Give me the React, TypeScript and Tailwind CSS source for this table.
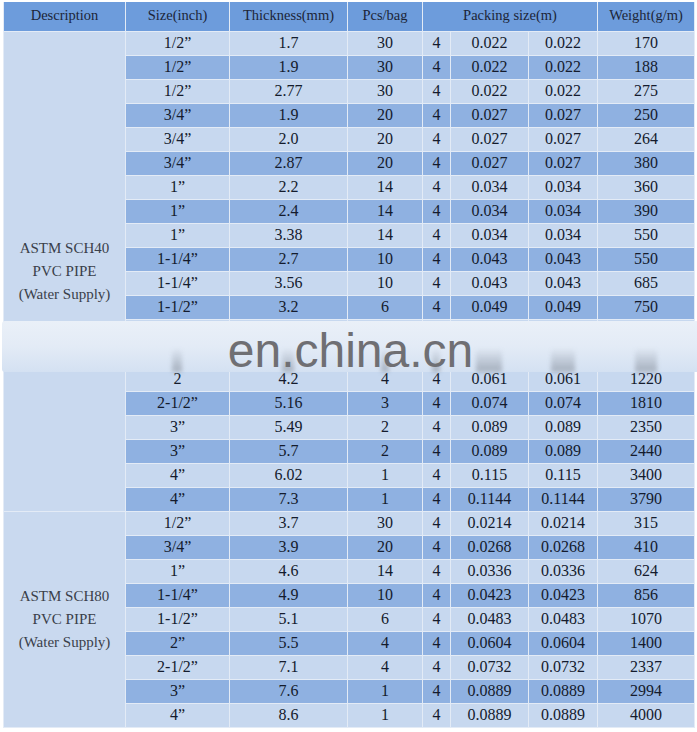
import React from "react";

type Row = [string, string, string, string, string, string, string];

const sch40: Row[] = [
  ["1/2”", "1.7", "30", "4", "0.022", "0.022", "170"],
  ["1/2”", "1.9", "30", "4", "0.022", "0.022", "188"],
  ["1/2”", "2.77", "30", "4", "0.022", "0.022", "275"],
  ["3/4”", "1.9", "20", "4", "0.027", "0.027", "250"],
  ["3/4”", "2.0", "20", "4", "0.027", "0.027", "264"],
  ["3/4”", "2.87", "20", "4", "0.027", "0.027", "380"],
  ["1”", "2.2", "14", "4", "0.034", "0.034", "360"],
  ["1”", "2.4", "14", "4", "0.034", "0.034", "390"],
  ["1”", "3.38", "14", "4", "0.034", "0.034", "550"],
  ["1-1/4”", "2.7", "10", "4", "0.043", "0.043", "550"],
  ["1-1/4”", "3.56", "10", "4", "0.043", "0.043", "685"],
  ["1-1/2”", "3.2", "6", "4", "0.049", "0.049", "750"],
  ["", "", "", "", "", "", ""],
  ["", "", "", "", "", "", ""],
  ["2", "4.2", "4", "4", "0.061", "0.061", "1220"],
  ["2-1/2”", "5.16", "3", "4", "0.074", "0.074", "1810"],
  ["3”", "5.49", "2", "4", "0.089", "0.089", "2350"],
  ["3”", "5.7", "2", "4", "0.089", "0.089", "2440"],
  ["4”", "6.02", "1", "4", "0.115", "0.115", "3400"],
  ["4”", "7.3", "1", "4", "0.1144", "0.1144", "3790"],
];

const sch80: Row[] = [
  ["1/2”", "3.7", "30", "4", "0.0214", "0.0214", "315"],
  ["3/4”", "3.9", "20", "4", "0.0268", "0.0268", "410"],
  ["1”", "4.6", "14", "4", "0.0336", "0.0336", "624"],
  ["1-1/4”", "4.9", "10", "4", "0.0423", "0.0423", "856"],
  ["1-1/2”", "5.1", "6", "4", "0.0483", "0.0483", "1070"],
  ["2”", "5.5", "4", "4", "0.0604", "0.0604", "1400"],
  ["2-1/2”", "7.1", "4", "4", "0.0732", "0.0732", "2337"],
  ["3”", "7.6", "1", "4", "0.0889", "0.0889", "2994"],
  ["4”", "8.6", "1", "4", "0.0889", "0.0889", "4000"],
];

const cell = "border border-[#e3ebf6] text-center p-0 leading-none";
const th = "border border-[#e3ebf6] border-t-0 font-normal p-0";

function Section({ rows, label }: { rows: Row[]; label: string }) {
  return (
    <>
      {rows.map((r, i) => (
        <tr key={i} className={`h-[24px] ${i % 2 === 0 ? "bg-[#c7d8ef]" : "bg-[#8fb1e1]"}`}>
          {i === 0 && (
            <td
              rowSpan={rows.length}
              className="border border-[#e3ebf6] bg-[#c9d9ef] text-center align-middle text-[15px] leading-[23px] text-[#3a3f4a] p-0"
            >
              <div>{label}</div>
              <div>PVC PIPE</div>
              <div>(Water Supply)</div>
            </td>
          )}
          {r.map((v, j) => (
            <td key={j} className={cell}>
              {v}
            </td>
          ))}
        </tr>
      ))}
    </>
  );
}

const Smudge = ({ w }: { w: string }) => (
  <div className="flex justify-center items-end h-full">
    <div className={`${w} h-[24px] bg-gradient-to-b from-transparent to-[#939ca8] blur-[2px] opacity-70`} />
  </div>
);

export default function App() {
  return (
    <div className="w-[697px] h-[732px] bg-white pt-[2px] pl-[3px] relative overflow-hidden">
      <table
        className="table-fixed border-collapse text-[16px] text-[#141b2d]"
        style={{ fontFamily: '"Liberation Serif", "Times New Roman", serif', width: 691 }}
      >
        <colgroup>
          <col className="w-[122px]" />
          <col className="w-[104px]" />
          <col className="w-[118px]" />
          <col className="w-[75px]" />
          <col className="w-[28px]" />
          <col className="w-[78px]" />
          <col className="w-[69px]" />
          <col className="w-[97px]" />
        </colgroup>
        <thead>
          <tr className="h-[29px] bg-[#6d9cdc] text-[14.5px] text-[#1c2538]">
            <th className={th}>Description</th>
            <th className={th}>Size(inch)</th>
            <th className={th}>Thickness(mm)</th>
            <th className={th}>Pcs/bag</th>
            <th colSpan={3} className={th}>
              Packing size(m)
            </th>
            <th className={th}>Weight(g/m)</th>
          </tr>
        </thead>
        <tbody>
          <Section rows={sch40} label="ASTM SCH40" />
          <Section rows={sch80} label="ASTM SCH80" />
        </tbody>
      </table>

      {/* watermark band overlaying the table */}
      <div className="absolute left-[2px] right-0 top-[321px] h-[51px] rounded-l-[3px] bg-gradient-to-b from-[#eaf0f8] via-[#e3ebf6] to-[#d4e1f2]">
        <div className="grid h-full pl-[1px] grid-cols-[122px_104px_118px_75px_28px_78px_69px_97px]">
          <div />
          <Smudge w="w-[10px]" />
          <Smudge w="w-[12px]" />
          <Smudge w="w-[8px]" />
          <Smudge w="w-[8px]" />
          <Smudge w="w-[26px]" />
          <Smudge w="w-[24px]" />
          <Smudge w="w-[22px]" />
        </div>
        <div
          className="absolute inset-0 flex justify-center text-[48px] leading-[60px] text-[#6f6f73]"
          style={{ fontFamily: '"Liberation Sans", Arial, sans-serif' }}
        >
          <span className="pl-[2px]">en.china.cn</span>
        </div>
      </div>
    </div>
  );
}
